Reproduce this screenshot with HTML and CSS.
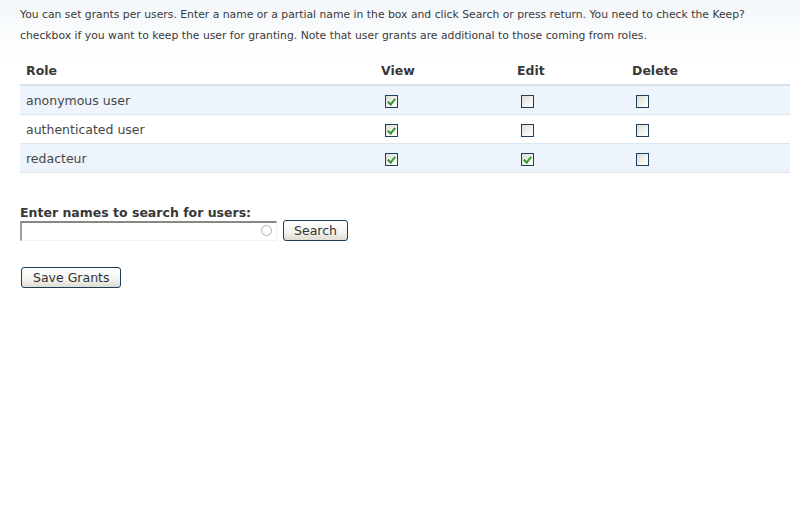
FILE: index.html
```html
<!DOCTYPE html>
<html>
<head>
<meta charset="utf-8">
<link rel="stylesheet" href="styles.css">
</head>
<body>
<div class="page">
  <p class="intro">You can set grants per users. Enter a name or a partial name in the box and click Search or press return. You need to check the Keep? checkbox if you want to keep the user for granting. Note that user grants are additional to those coming from roles.</p>
  <table class="grants">
    <thead>
      <tr><th class="c-role">Role</th><th class="c-view">View</th><th class="c-edit">Edit</th><th class="c-del">Delete</th></tr>
    </thead>
    <tbody>
      <tr class="odd"><td>anonymous user</td><td><input type="checkbox" class="cb" checked></td><td><input type="checkbox" class="cb"></td><td><input type="checkbox" class="cb"></td></tr>
      <tr class="even"><td>authenticated user</td><td><input type="checkbox" class="cb" checked></td><td><input type="checkbox" class="cb"></td><td><input type="checkbox" class="cb"></td></tr>
      <tr class="odd"><td>redacteur</td><td><input type="checkbox" class="cb" checked></td><td><input type="checkbox" class="cb" checked></td><td><input type="checkbox" class="cb"></td></tr>
    </tbody>
  </table>
  <div class="search">
    <label class="search-label">Enter names to search for users:</label>
    <div class="search-row">
      <div class="field">
        <input type="text" class="text">
        <span class="throbber"></span>
      </div>
      <button class="btn">Search</button>
    </div>
  </div>
  <div class="actions">
    <button class="btn btn-save">Save Grants</button>
  </div>
</div>
</body>
</html>
```

FILE: styles.css
```css
html, body {
  margin: 0;
  padding: 0;
}
body {
  background: linear-gradient(#f3f7fa 0, #ffffff 60px) no-repeat;
  background-color: #fff;
  font-family: "DejaVu Sans", Verdana, sans-serif;
  color: #3a3a3a;
  min-height: 512px;
}
.page {
  padding: 4px 10px 0 20px;
}
.intro {
  margin: 0;
  font-size: 10.8px;
  line-height: 21px;
  color: #3a3a3a;
  width: 760px;
}
.grants {
  margin-top: 11px;
  width: 770px;
  border-collapse: collapse;
  font-size: 12.5px;
}
.grants th {
  text-align: left;
  font-weight: bold;
  color: #383838;
  padding: 0 6px;
  height: 27px;
  border-bottom: 2px solid #d3e2ec;
  vertical-align: middle;
}
.c-role { width: 343px; }
.c-view { width: 124px; }
.c-edit { width: 103px; }
.grants td {
  padding: 0 6px;
  height: 28px;
  color: #474747;
  border-bottom: 1px solid #dbe6ee;
  vertical-align: middle;
}
.grants tr.odd td { background: #edf4fb; }
.grants tr.even td { background: #fff; }
.cb {
  -webkit-appearance: none;
  appearance: none;
  width: 13px;
  height: 13px;
  margin: 0 0 0 4px;
  border: 1px solid #1c3f5e;
  background: linear-gradient(135deg, #dcdcd4 0%, #f4f4f0 60%, #ffffff 100%);
  position: relative;
  vertical-align: middle;
  display: inline-block;
  box-sizing: border-box;
}
.cb:checked::after {
  content: "";
  position: absolute;
  left: 3px;
  top: 1px;
  width: 3px;
  height: 6px;
  border: solid #2f9a2f;
  border-width: 0 2px 2px 0;
  transform: rotate(40deg);
}
.search {
  margin-top: 32px;
}
.search-label {
  display: block;
  font-size: 12.5px;
  font-weight: bold;
  color: #383838;
  line-height: 15px;
}
.search-row {
  display: flex;
  align-items: center;
  gap: 6px;
  margin-top: 0;
}
.field {
  position: relative;
}
.text {
  display: block;
  box-sizing: border-box;
  width: 257px;
  height: 20px;
  margin: 0;
  border-style: solid;
  border-width: 2px 1px 1px 2px;
  border-color: #8a8780 #f2f2f2 #f2f2f2 #a09d96;
  background: #fff;
  font-family: inherit;
  font-size: 12px;
}
.throbber {
  position: absolute;
  right: 5px;
  top: 4px;
  width: 9px;
  height: 9px;
  border: 1px solid #b0b0b0;
  border-radius: 50%;
}
.btn {
  font-family: "DejaVu Sans", Verdana, sans-serif;
  font-size: 12.5px;
  color: #333;
  height: 21px;
  padding: 0 10px;
  border: 1px solid #1d3c58;
  border-radius: 3px;
  background: linear-gradient(#ffffff 0%, #f3f3ee 60%, #dedcd2 100%);
  line-height: 19px;
}
.actions {
  margin-top: 26px;
  padding-left: 1px;
}
.btn-save {
  padding: 0 11px;
}
```
